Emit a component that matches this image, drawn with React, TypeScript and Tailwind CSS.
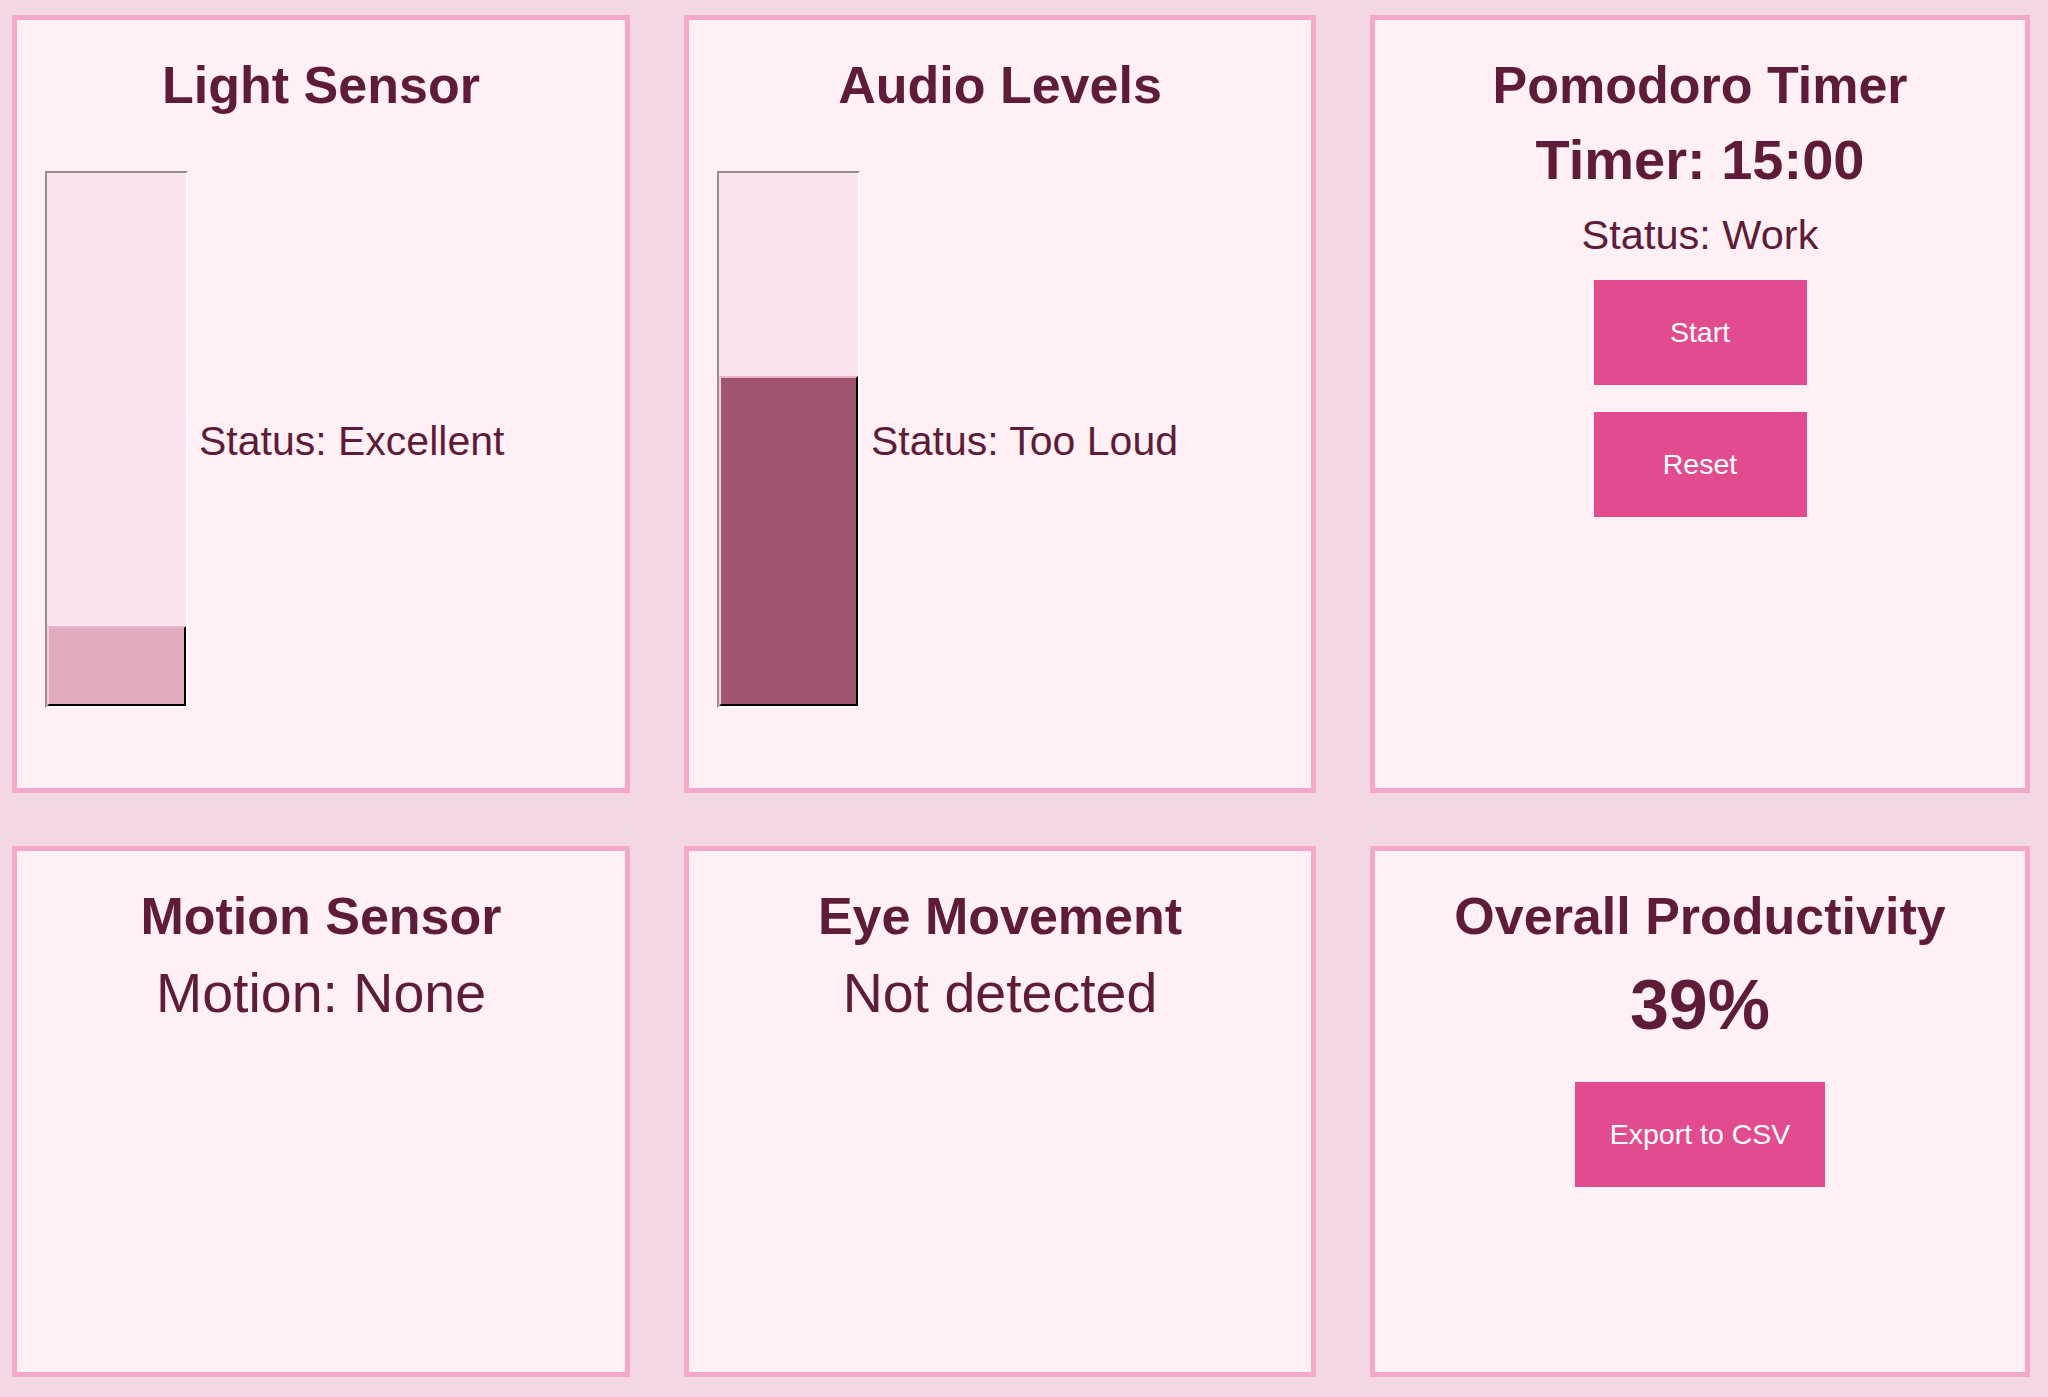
import React from "react";

const font = "font-['Liberation_Sans',Arial,sans-serif]";

function Card({ children }: { children: React.ReactNode }) {
  return (
    <div className="flex flex-col items-center border-[5px] border-[#f5a9c8] bg-[#fff0f5] px-[28px] pt-[35px]">
      {children}
    </div>
  );
}

function Heading({ children }: { children: React.ReactNode }) {
  return (
    <h2 className="text-center text-[52px] font-bold leading-[60px] text-[#5e1c38]">
      {children}
    </h2>
  );
}

function Meter({
  percent,
  fill,
  status,
}: {
  percent: number;
  fill: string;
  status: string;
}) {
  return (
    <div className="mt-[56px] flex w-full items-center">
      <div className="flex h-[537px] w-[143px] shrink-0 flex-col justify-end border-2 border-t-[#9a8c92] border-l-[#9a8c92] border-r-white border-b-white bg-[#f9e3ee]">
        <div
          className={`w-full border-2 border-t-[#eab5c9] border-l-[#f2cfdc] border-r-black border-b-black ${fill}`}
          style={{ height: `${percent}%` }}
        />
      </div>
      <p className="ml-[11px] mt-[3px] text-[41px] leading-[48px] text-[#5e1c38]">
        {status}
      </p>
    </div>
  );
}

function Button({ children, wide }: { children: React.ReactNode; wide?: boolean }) {
  return (
    <button
      className={`flex h-[105px] items-center justify-center bg-[#e24c8f] text-[28.5px] text-white ${
        wide ? "w-[250px]" : "w-[213px]"
      }`}
    >
      {children}
    </button>
  );
}

export default function App() {
  return (
    <div
      className={`${font} min-h-[1397px] w-full bg-[#f3d7e6] pl-[12px] pt-[15px] text-[#5e1c38]`}
    >
      <div className="grid grid-cols-[618px_632px_660px] grid-rows-[778px_531px] gap-x-[54px] gap-y-[53px]">
        <Card>
          <Heading>Light Sensor</Heading>
          <Meter percent={15} fill="bg-[#e1aabf]" status="Status: Excellent" />
        </Card>

        <Card>
          <Heading>Audio Levels</Heading>
          <Meter percent={62} fill="bg-[#a05471]" status="Status: Too Loud" />
        </Card>

        <Card>
          <Heading>Pomodoro Timer</Heading>
          <p className="mt-[13px] text-[56px] font-bold leading-[64px]">Timer: 15:00</p>
          <p className="mt-[19px] text-[41.5px] leading-[48px]">Status: Work</p>
          <div className="mt-[21px] flex flex-col items-center gap-[27px]">
            <Button>Start</Button>
            <Button>Reset</Button>
          </div>
        </Card>

        <Card>
          <Heading>Motion Sensor</Heading>
          <p className="mt-[16px] text-[55.5px] leading-[63px]">Motion: None</p>
        </Card>

        <Card>
          <Heading>Eye Movement</Heading>
          <p className="mt-[16px] text-[55.5px] leading-[63px]">Not detected</p>
        </Card>

        <Card>
          <Heading>Overall Productivity</Heading>
          <p className="mt-[19px] text-[70px] font-bold leading-[80px]">39%</p>
          <div className="mt-[37px]">
            <Button wide>Export to CSV</Button>
          </div>
        </Card>
      </div>
    </div>
  );
}
